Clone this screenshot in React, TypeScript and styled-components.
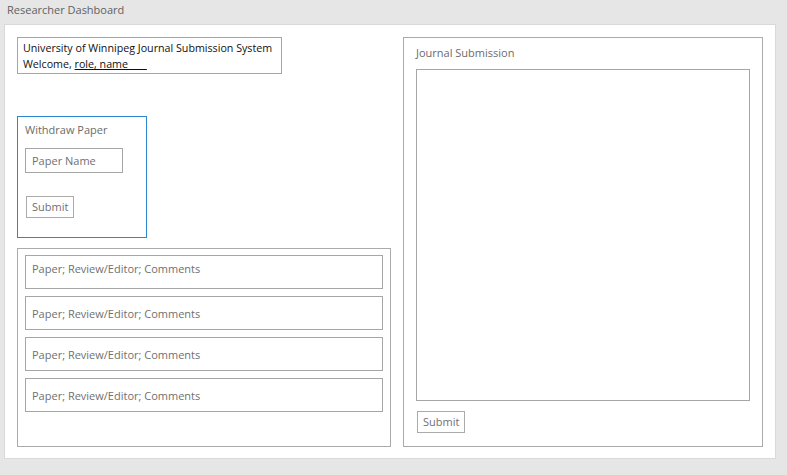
import styled, { createGlobalStyle } from 'styled-components';

const GlobalStyle = createGlobalStyle`
  * { box-sizing: border-box; }
  html, body { margin: 0; padding: 0; }
  body {
    background: #e6e6e6;
    font-family: "Open Sans", "Noto Sans", "Liberation Sans", sans-serif;
    font-size: 11px;
    color: #666;
  }
`;

const Page = styled.div`
  width: 787px;
  height: 475px;
  padding: 0 11px 0 4px;
  display: flex;
  flex-direction: column;
`;

const TitleBar = styled.div`
  height: 24px;
  padding: 2px 0 0 3px;
  line-height: 16px;
  font-size: 11px;
  color: #616161;
`;

const Panel = styled.div`
  width: 772px;
  height: 435px;
  background: #fff;
  border: 1px solid #d9d9d9;
  padding: 12px 12px 11px 12px;
  display: grid;
  grid-template-columns: 374px 360px;
  column-gap: 12px;
`;

const LeftColumn = styled.div`
  display: flex;
  flex-direction: column;
`;

const HeaderBox = styled.div`
  width: 265px;
  height: 37px;
  border: 1px solid #a6a6a6;
  padding: 2px 5px;
  color: #111;
  font-size: 10.7px;
  line-height: 16px;
  white-space: nowrap;
`;

const Underlined = styled.span`
  text-decoration: underline;
`;

const Box = styled.div<{ $accent?: boolean }>`
  border: 1px solid ${({ $accent }) => ($accent ? '#2b87d1' : '#ababab')};
`;

const WithdrawBox = styled(Box)`
  width: 130px;
  height: 122px;
  margin-top: 42px;
  padding: 5px 7px;
  display: flex;
  flex-direction: column;
  align-items: flex-start;
`;

const Label = styled.div`
  line-height: 16px;
  font-size: 11px;
  color: #6b6b6b;
`;

const TextField = styled.div`
  width: 98px;
  height: 25px;
  margin-top: 10px;
  border: 1px solid #a6a6a6;
  padding: 0 6px;
  line-height: 23px;
  color: #707070;
`;

const Button = styled.div<{ $top: number }>`
  margin-top: ${({ $top }) => $top}px;
  margin-left: 1px;
  width: 48px;
  height: 22px;
  border: 1px solid #ababab;
  padding: 0 5px;
  line-height: 20px;
  color: #707070;
`;

const ListBox = styled(Box)`
  flex: 1;
  margin-top: 10px;
  padding: 6px 7px;
  display: flex;
  flex-direction: column;
  gap: 7px;
`;

const Row = styled.div<{ $tight?: boolean }>`
  height: 34px;
  border: 1px solid #a6a6a6;
  padding: ${({ $tight }) => ($tight ? '5px' : '9px')} 6px 0;
  line-height: 16px;
  color: #707070;
`;

const JournalBox = styled(Box)`
  padding: 7px 12px 13px;
  display: flex;
  flex-direction: column;
  align-items: flex-start;
`;

const TextArea = styled.div`
  width: 334px;
  height: 332px;
  margin-top: 8px;
  border: 1px solid #a6a6a6;
`;

const rows = [true, false, false, false];

export default function App() {
  return (
    <>
      <GlobalStyle />
      <Page>
        <TitleBar>Researcher Dashboard</TitleBar>
        <Panel>
          <LeftColumn>
            <HeaderBox>
              University of Winnipeg Journal Submission System
              <br />
              Welcome, <Underlined>role, name____</Underlined>
            </HeaderBox>
            <WithdrawBox $accent>
              <Label>Withdraw Paper</Label>
              <TextField>Paper Name</TextField>
              <Button $top={23}>Submit</Button>
            </WithdrawBox>
            <ListBox>
              {rows.map((tight, i) => (
                <Row key={i} $tight={tight}>
                  Paper; Review/Editor; Comments
                </Row>
              ))}
            </ListBox>
          </LeftColumn>
          <JournalBox>
            <Label>Journal Submission</Label>
            <TextArea />
            <Button $top={10}>Submit</Button>
          </JournalBox>
        </Panel>
      </Page>
    </>
  );
}
